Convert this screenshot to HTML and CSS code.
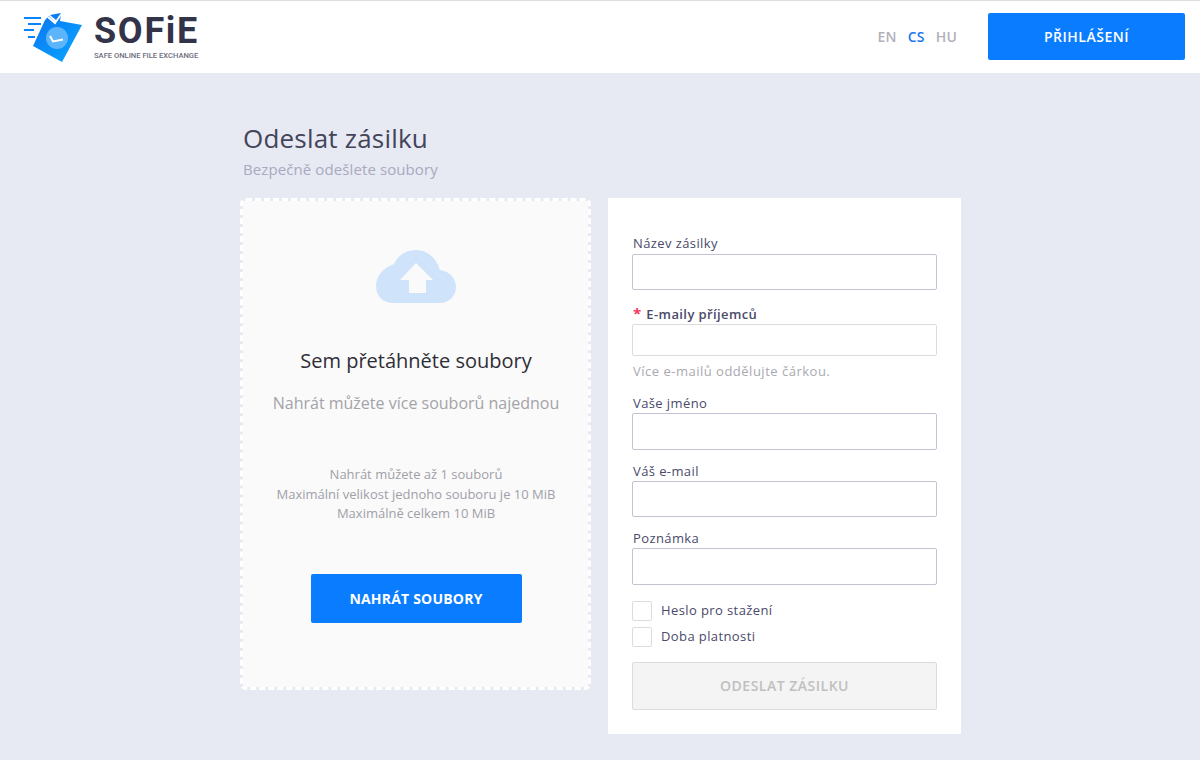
FILE: index.html
```html
<!DOCTYPE html>
<html lang="cs">
<head>
    <meta charset="UTF-8">
    <title>SOFiE - Odeslat zásilku</title>
    <link rel="stylesheet" href="styles.css">
</head>
<body>
    <header class="topbar">
        <a class="brand" href="#">
            <svg class="brand-icon" width="60" height="50" viewBox="0 0 60 50">
                <defs>
                    <linearGradient id="sheet" x1="0" y1="0" x2="1" y2="1">
                        <stop offset="0" stop-color="#0a74f2"/>
                        <stop offset="1" stop-color="#0aa8ff"/>
                    </linearGradient>
                </defs>
                <rect x="0" y="4" width="17" height="2" fill="#0a84ff"/>
                <rect x="4" y="10" width="13" height="2" fill="#0a84ff"/>
                <rect x="0" y="16" width="10" height="2" fill="#0a84ff"/>
                <rect x="4" y="23" width="7" height="2" fill="#0a84ff"/>
                <path d="M21 7 25 3 31 9 37 1 36 8 58 12 38 49 9 33z" fill="url(#sheet)"/>
                <path d="M24 4 31 10 37 1" fill="none" stroke="#fff" stroke-width="2"/>
                <path d="M26 2 37 0 32 7z" fill="#0a7cf5"/>
                <circle cx="33" cy="25" r="11" fill="#5cb4fb"/>
                <path d="M26 23 29 28.500 39 26.500" fill="none" stroke="#fff" stroke-width="2"/>
            </svg>
            <span class="brand-text">
                <span class="brand-name">SOFiE</span>
                <span class="brand-sub">SAFE ONLINE FILE EXCHANGE</span>
            </span>
        </a>
        <nav class="langs">
            <a href="#">EN</a>
            <a href="#" class="active">CS</a>
            <a href="#">HU</a>
        </nav>
        <button class="btn btn-primary login">PŘIHLÁŠENÍ</button>
    </header>

    <main class="content">
        <h1>Odeslat zásilku</h1>
        <p class="subtitle">Bezpečně odešlete soubory</p>

        <div class="columns">
            <section class="dropzone">
                <svg class="cloud" width="80" height="53" viewBox="0 0 80 53">
                    <path d="M17 53C7 53 0 46 0 36 0 26 7 18 18 14 22 5 30 0 40 0 51 0 60 7 64 20 73 21 80 28 80 37 80 46 73 53 64 53z" fill="#cfe4fb"/>
                    <path d="M40 13 57 30H50V43H33V30H24z" fill="#fafafa"/>
                </svg>
                <h2>Sem přetáhněte soubory</h2>
                <p class="drop-hint">Nahrát můžete více souborů najednou</p>
                <div class="limits">
                    <p>Nahrát můžete až 1 souborů</p>
                    <p>Maximální velikost jednoho souboru je 10 MiB</p>
                    <p>Maximálně celkem 10 MiB</p>
                </div>
                <button class="btn btn-primary upload">NAHRÁT SOUBORY</button>
            </section>

            <form class="panel">
                <div class="field field-first">
                    <label for="name">Název zásilky</label>
                    <input id="name" type="text">
                </div>
                <div class="field field-required">
                    <label for="mails"><span class="star">*</span> E-maily příjemců</label>
                    <input id="mails" type="text">
                    <small>Více e-mailů oddělujte čárkou.</small>
                </div>
                <div class="field">
                    <label for="sender">Vaše jméno</label>
                    <input id="sender" type="text">
                </div>
                <div class="field">
                    <label for="mail">Váš e-mail</label>
                    <input id="mail" type="text">
                </div>
                <div class="field">
                    <label for="note">Poznámka</label>
                    <input id="note" type="text">
                </div>
                <div class="checks">
                    <label class="check"><span class="box"></span>Heslo pro stažení</label>
                    <label class="check"><span class="box"></span>Doba platnosti</label>
                </div>
                <button class="btn submit" type="button" disabled>ODESLAT ZÁSILKU</button>
            </form>
        </div>
    </main>
</body>
</html>
```
FILE: styles.css
```css
/* SOFiE upload page */
* {
    box-sizing: border-box;
}

body {
    margin: 0;
    min-height: 760px;
    background: #e7eaf3;
    font-family: "Open Sans", sans-serif;
    color: #3c3c50;
    overflow: hidden;
}

p, h1, h2 {
    margin: 0;
    font-weight: 400;
}

.topbar {
    display: flex;
    align-items: center;
    height: 73px;
    padding: 0 15px 2px 24px;
    background: #fff;
    border-top: 1px solid #dedede;
}

.brand {
    display: flex;
    align-items: flex-start;
    gap: 11px;
    margin-top: 3px;
    text-decoration: none;
}

.brand-text {
    display: flex;
    flex-direction: column;
    margin: -3px 0 0 -1px;
}

.brand-name {
    font-family: Roboto, sans-serif;
    font-weight: 700;
    font-size: 36px;
    line-height: 42px;
    letter-spacing: 1.700px;
    color: #33334a;
}

.brand-sub {
    font-family: Roboto, sans-serif;
    font-weight: 500;
    font-size: 7.600px;
    line-height: 8px;
    color: #6d6d7c;
}

.langs {
    display: flex;
    gap: 11px;
    margin-left: auto;
    margin-right: 31px;
    font-size: 14px;
    font-weight: 600;
    letter-spacing: 0.200px;
}

.langs a {
    color: #b1b1bb;
    text-decoration: none;
}

.langs .active {
    color: #1a78f0;
}

.btn {
    border: 0;
    border-radius: 2px;
    font-family: inherit;
    font-weight: 600;
    font-size: 14px;
    letter-spacing: 0.500px;
    cursor: pointer;
}

.btn-primary {
    background: #0a7cff;
    color: #fff;
}

.login {
    width: 197px;
    height: 47px;
}

.content {
    width: 721px;
    margin-left: 240px;
    padding-top: 48px;
}

h1 {
    padding-left: 3px;
    font-size: 26px;
    line-height: 34px;
    letter-spacing: 0.200px;
    color: #44445a;
}

.subtitle {
    margin-top: 4px;
    padding-left: 3px;
    font-size: 15px;
    line-height: 20px;
    letter-spacing: 0.100px;
    color: #a9a9c0;
}

.columns {
    display: flex;
    align-items: flex-start;
    gap: 17px;
    margin-top: 19px;
}

.dropzone {
    display: flex;
    flex-direction: column;
    align-items: center;
    width: 351px;
    height: 492px;
    padding: 49px 0 0 1px;
    background: #fafafa;
    background-clip: padding-box;
    border: 3px dashed #fff;
    border-radius: 6px;
    text-align: center;
}

.cloud {
    display: block;
}

.dropzone h2 {
    margin-top: 45px;
    font-size: 20px;
    line-height: 26px;
    color: #2e2e36;
}

.drop-hint {
    margin-top: 18px;
    font-size: 16px;
    line-height: 22px;
    color: #a3a3a8;
}

.limits {
    margin-top: 51px;
    font-size: 13px;
    line-height: 19.500px;
    color: #a0a0a8;
}

.upload {
    width: 211px;
    height: 49px;
    margin-top: 50px;
    font-weight: 700;
    letter-spacing: 0.200px;
}

.panel {
    width: 353px;
    height: 536px;
    padding: 36px 24px 0;
    background: #fff;
}

.field {
    margin-bottom: 11px;
}

.field label {
    display: block;
    height: 20px;
    padding-left: 1px;
    font-size: 13px;
    line-height: 20px;
    letter-spacing: 0.400px;
    color: #4a4a6a;
}

.field input {
    display: block;
    width: 100%;
    height: 36.500px;
    border: 1px solid #c2c2d2;
    border-radius: 2px;
    background: #fff;
}

.field-first {
    margin-bottom: 14px;
}

.field-first label {
    line-height: 18px;
}

.field-first input {
    height: 36px;
}

.field-required {
    margin-bottom: 13px;
}

.field-required label {
    font-weight: 600;
}

.field-required input {
    height: 32px;
    border-color: #dcdcdc;
}

.field-required small {
    display: block;
    margin-top: 6px;
    padding-left: 1px;
    font-size: 13px;
    line-height: 18px;
    letter-spacing: 0.500px;
    color: #a9a9b0;
}

.star {
    margin-right: 1px;
    font-size: 15px;
    line-height: 0;
    font-weight: 700;
    color: #f5365c;
}

.checks {
    margin-top: 16.500px;
}

.check {
    display: flex;
    align-items: flex-start;
    gap: 9px;
    height: 20px;
    margin-bottom: 6px;
    font-size: 13px;
    line-height: 18px;
    letter-spacing: 0.400px;
    color: #4a4a6a;
}

.box {
    width: 20px;
    height: 20px;
    border: 1px solid #dcdcdc;
    border-radius: 2px;
}

.submit {
    display: block;
    width: 100%;
    height: 48px;
    margin-top: 15px;
    padding-bottom: 3px;
    background: #f4f4f4;
    border: 1px solid #dcdcdc;
    color: #c0c0c0;
}
```
